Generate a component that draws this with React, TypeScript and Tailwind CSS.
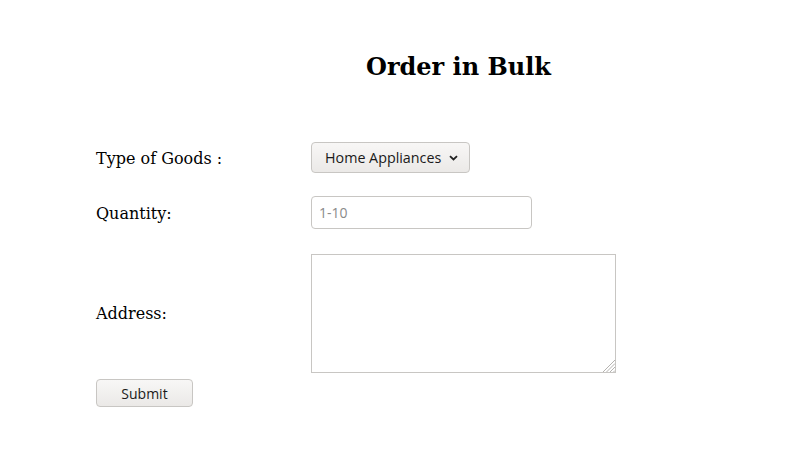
import React from 'react';

const sans = "font-['Open_Sans',sans-serif]";

export default function App() {
  return (
    <div className="min-h-[467px] bg-white font-['DejaVu_Serif',serif] text-black">
      {/* Title */}
      <div className="pt-[51px] pl-[110px] text-center">
        <h1 className="text-[24px] font-bold leading-[32px]">Order in Bulk</h1>
      </div>

      {/* Form */}
      <form className="mt-[59px] pl-[96px]" onSubmit={(e) => e.preventDefault()}>
        <div className="grid grid-cols-[215px_auto] items-center gap-y-[23px]">
          <label className="pt-[2px] text-[16px]">Type of Goods :</label>
          <div>
            <button
              type="button"
              className={`${sans} flex h-[31px] items-center gap-[8px] rounded-[4px] border border-[#c8c6c3] bg-gradient-to-b from-[#f8f7f6] to-[#ebe9e7] pl-[13px] pr-[11px] text-[14.3px] text-[#1a1a1a]`}
            >
              Home Appliances
              <svg width="9" height="6" viewBox="0 0 9 6" fill="none">
                <path d="M1 1.2l3.5 3.3L8 1.2" stroke="#222" strokeWidth="1.8" />
              </svg>
            </button>
          </div>

          <label className="pt-[2px] text-[16px]">Quantity:</label>
          <div>
            <input
              placeholder="1-10"
              className={`${sans} h-[33px] w-[221px] rounded-[4px] border border-[#c8c6c3] px-[7px] text-[14px] outline-none placeholder:text-[#8a8a8a]`}
            />
          </div>

          <label className="pt-[3px] text-[16px]">Address:</label>
          <div className="relative mt-[2px] w-[305px]">
            <textarea className="block h-[119px] w-[305px] resize-none border border-[#c8c6c3] outline-none" />
            {/* resize grip */}
            <svg
              className="pointer-events-none absolute bottom-[1px] right-[1px]"
              width="13"
              height="13"
              viewBox="0 0 13 13"
            >
              <path d="M13 1L1 13M13 4.5L4.5 13M13 8L8 13M13 11.5L11.5 13" stroke="#b5b3b0" strokeWidth="1" />
            </svg>
          </div>
        </div>

        <button
          type="submit"
          className={`${sans} mt-[6px] h-[28px] w-[97px] rounded-[4px] border border-[#c8c6c3] bg-gradient-to-b from-[#f8f7f6] to-[#ebe9e7] text-[14px] text-[#1a1a1a]`}
        >
          Submit
        </button>
      </form>
    </div>
  );
}
